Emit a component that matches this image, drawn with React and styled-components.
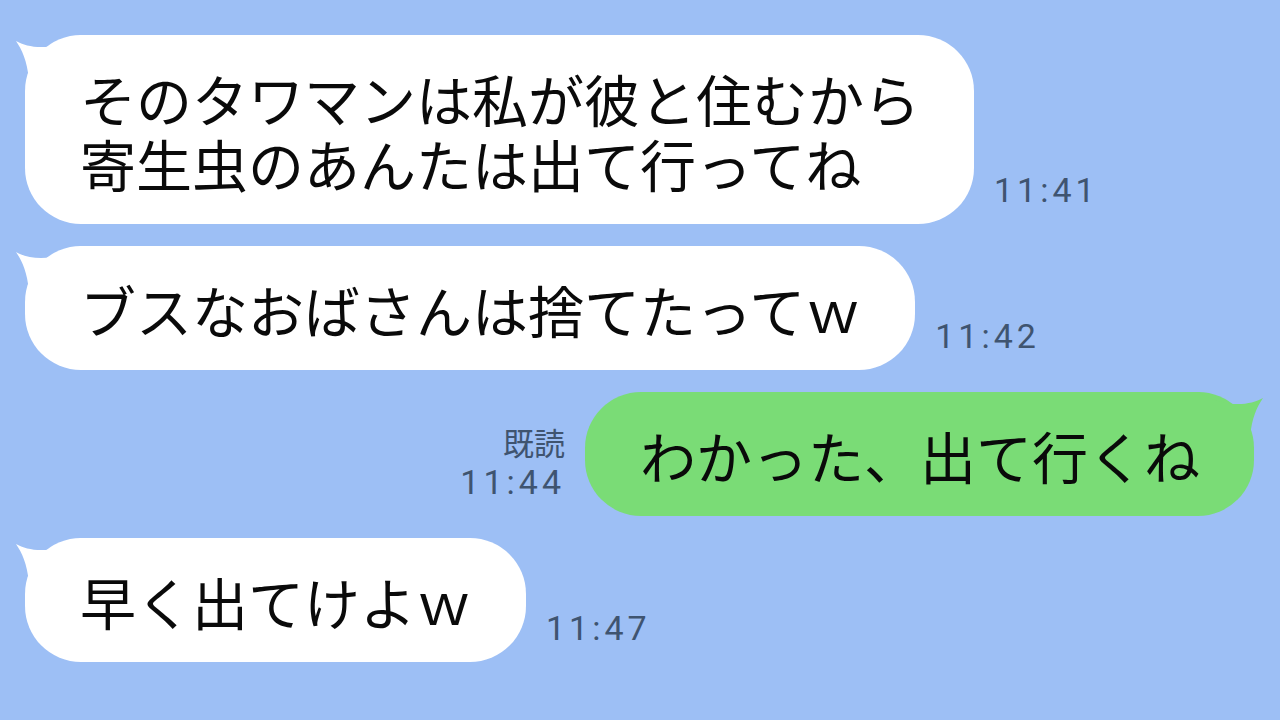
import React from 'react'
import styled, { createGlobalStyle } from 'styled-components'

const GlobalStyle = createGlobalStyle`
html, body {
    margin: 0;
    padding: 0;
    background: #9dbff5;
}
#root {
    min-height: 720px;
}
`

const messages = [
    { id: 1, side: 'left', lines: ['そのタワマンは私が彼と住むから', '寄生虫のあんたは出て行ってね'], time: '11:41' },
    { id: 2, side: 'left', lines: ['ブスなおばさんは捨てたってｗ'], time: '11:42' },
    { id: 3, side: 'right', lines: ['わかった、出て行くね'], time: '11:44', read: true },
    { id: 4, side: 'left', lines: ['早く出てけよｗ'], time: '11:47' },
]

const Tail = ({ color, side }) => (
    <TailSvg $side={side} width="70" height="45" viewBox="-12 0 70 45">
        <path d="M -9 6 C 5 14, 30 16, 55 0 L 58 0 L 58 45 L 4 45 C 2 25, -3 15, -9 6 Z" fill={color} />
    </TailSvg>
)

const ChatView = () => {
    return <Screen>
        <GlobalStyle />
        {messages.map(m => <Row key={m.id} $side={m.side}>
            {m.side === 'right' && <Meta $side="right">
                {m.read && <Read>既読</Read>}
                <Time>{m.time}</Time>
            </Meta>}
            <Bubble $side={m.side}>
                <Tail side={m.side} color={m.side === 'right' ? '#7adc76' : '#ffffff'} />
                {m.lines.map((l, i) => <Line key={i}>{l}</Line>)}
            </Bubble>
            {m.side === 'left' && <Meta $side="left">
                <Time>{m.time}</Time>
            </Meta>}
        </Row>)}
    </Screen>
}

const Screen = styled.div`
    display: flex;
    flex-direction: column;
    gap: 22px;
    padding: 35px 26px 0 25px;
    width: 1280px;
    height: 720px;
    box-sizing: border-box;
    overflow: hidden;
`

const Row = styled.div`
    display: flex;
    align-items: flex-end;
    justify-content: ${p => p.$side === 'right' ? 'flex-end' : 'flex-start'};
    gap: 20px;
`

const Bubble = styled.div`
    position: relative;
    background: ${p => p.$side === 'right' ? '#7adc76' : '#ffffff'};
    border-radius: 56px;
    padding: 30px 54px 29px 55px;
    font-family: "Noto Sans CJK JP", sans-serif;
    font-size: 56px;
    line-height: 65px;
    color: #0a0a0a;
    white-space: nowrap;
`

const TailSvg = styled.svg`
    position: absolute;
    top: 0;
    ${p => p.$side === 'right' ? 'right: -12px; transform: scaleX(-1);' : 'left: -12px;'}
`

const Line = styled.div`
    position: relative;
    height: 65px;
`

const Meta = styled.div`
    display: flex;
    flex-direction: column;
    align-items: ${p => p.$side === 'right' ? 'flex-end' : 'flex-start'};
    margin-bottom: 15px;
    color: #3f5470;
`

const Read = styled.div`
    font-family: "Noto Sans CJK JP", sans-serif;
    font-size: 31px;
    line-height: 42px;
`

const Time = styled.div`
    font-family: Roboto, "Liberation Sans", sans-serif;
    font-size: 34px;
    line-height: 38px;
    letter-spacing: 4px;
`

export default ChatView
